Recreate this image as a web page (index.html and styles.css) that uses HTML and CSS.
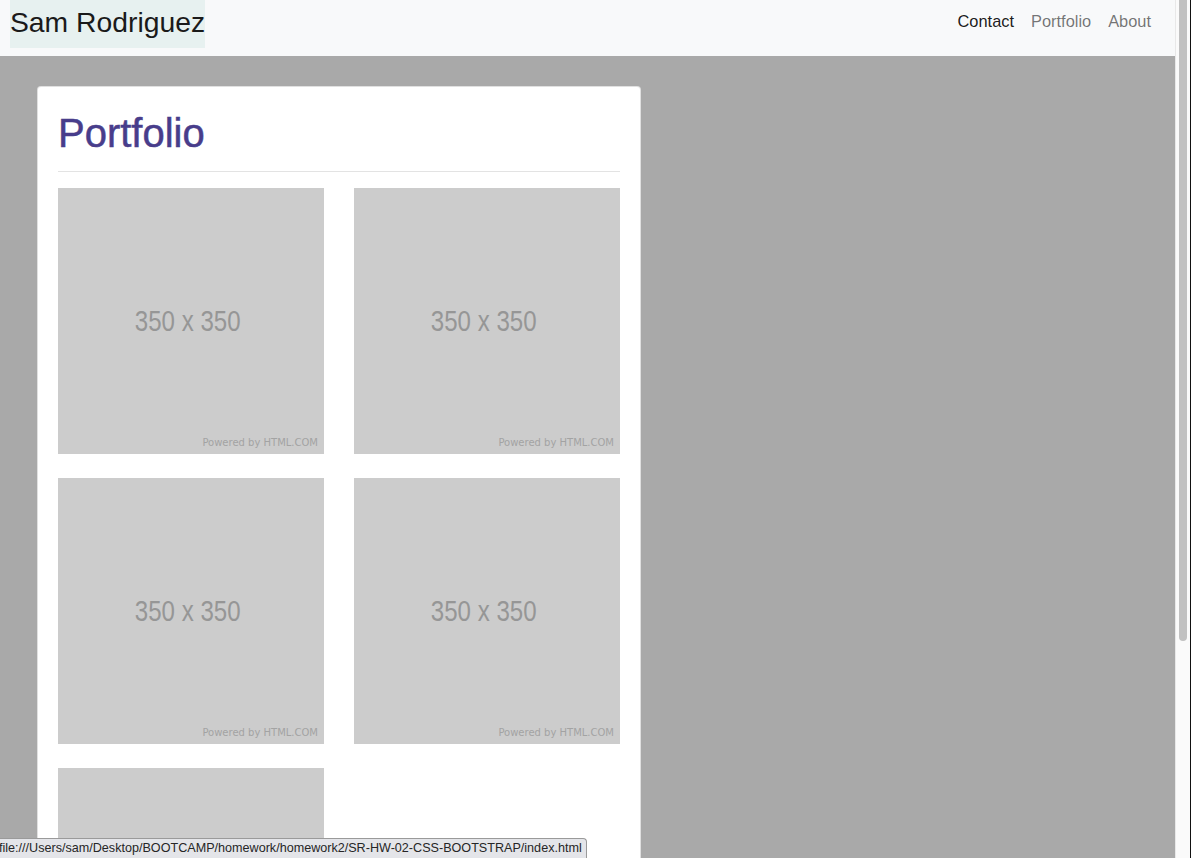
FILE: index.html
```html
<!DOCTYPE html>
<html lang="en">
<head>
<meta charset="utf-8">
<title>Sam Rodriguez</title>
<link rel="stylesheet" href="styles.css">
</head>
<body>
<div class="window">
  <div class="page">
    <header class="navbar">
      <a class="brand" href="#">Sam Rodriguez</a>
      <nav class="nav">
        <a class="nav-link active" href="#">Contact</a>
        <a class="nav-link" href="#">Portfolio</a>
        <a class="nav-link" href="#">About</a>
      </nav>
    </header>
    <main class="main">
      <section class="card">
        <h1 class="title">Portfolio</h1>
        <hr class="rule">
        <div class="gallery">
          <div class="ph"><span class="ph-size">350 x 350</span><span class="ph-credit">Powered by HTML.COM</span></div>
          <div class="ph"><span class="ph-size">350 x 350</span><span class="ph-credit">Powered by HTML.COM</span></div>
          <div class="ph"><span class="ph-size">350 x 350</span><span class="ph-credit">Powered by HTML.COM</span></div>
          <div class="ph"><span class="ph-size">350 x 350</span><span class="ph-credit">Powered by HTML.COM</span></div>
          <div class="ph"><span class="ph-size">350 x 350</span><span class="ph-credit">Powered by HTML.COM</span></div>
        </div>
      </section>
    </main>
  </div>
  <div class="scrollbar"><div class="thumb"></div></div>
</div>
<div class="statusbar">file:///Users/sam/Desktop/BOOTCAMP/homework/homework2/SR-HW-02-CSS-BOOTSTRAP/index.html</div>
</body>
</html>
```

FILE: styles.css
```css
* { box-sizing: border-box; }
html, body { margin: 0; padding: 0; height: 100%; overflow: hidden; }
body {
  font-family: "Liberation Sans", Arial, sans-serif;
  color: #212529;
  background: #a9a9a9;
}
.window {
  display: flex;
  height: 858px;
  overflow: hidden;
}
.page {
  width: 1175px;
  flex: none;
  display: flex;
  flex-direction: column;
  background: #a9a9a9;
}
.navbar {
  height: 56px;
  flex: none;
  background: #f8f9fa;
  display: flex;
  justify-content: space-between;
  align-items: flex-start;
  padding: 0 16px 0 10px;
}
.brand {
  display: block;
  background: #e7f1f0;
  color: #1a1a1a;
  text-decoration: none;
  font-size: 28.3px;
  line-height: 32px;
  padding: 6px 0 10px;
}
.nav {
  display: flex;
  padding-top: 9px;
}
.nav-link {
  font-size: 16.4px;
  line-height: 24px;
  padding: 0 8.5px;
  color: rgba(0,0,0,.55);
  text-decoration: none;
}
.nav-link:last-child { padding-right: 8px; }
.nav-link.active { color: rgba(0,0,0,.9); }
.main {
  flex: 1;
  padding: 30px 0 0 37px;
}
.card {
  width: 604px;
  background: #fff;
  border: 1px solid rgba(0,0,0,.12);
  border-radius: 4px;
  padding: 22px 20px 40px 20px;
}
.title {
  margin: 0;
  font-weight: 400;
  font-size: 40px;
  line-height: 48px;
  color: #483d8b;
  -webkit-text-stroke: 0.5px #483d8b;
}
.rule {
  margin: 14px 0 16px;
  border: 0;
  border-top: 1px solid #e3e3e3;
}
.gallery {
  display: grid;
  grid-template-columns: 266px 266px;
  column-gap: 30px;
  row-gap: 24px;
}
.ph {
  position: relative;
  width: 266px;
  height: 266px;
  background: #cccccc;
  display: flex;
  align-items: center;
  justify-content: center;
}
.ph-size {
  font-family: "Liberation Sans", Arial, sans-serif;
  font-size: 29px;
  color: #969696;
  transform: scaleX(0.83);
  margin-left: -6px;
}
.ph-credit {
  position: absolute;
  right: 6px;
  bottom: 6px;
  font-family: "DejaVu Sans", Verdana, sans-serif;
  font-size: 10px;
  color: #a3a3a3;
}
.scrollbar {
  width: 16px;
  flex: none;
  background: #fafafa;
  border-left: 1px solid #e8e8e8;
  border-right: 1px solid #111;
  padding: 0 3px 0 3px;
}
.thumb {
  width: 8px;
  height: 641px;
  background: #c1c1c1;
  border-radius: 0 0 4px 4px;
}
.statusbar {
  position: fixed;
  left: 0;
  bottom: 0;
  width: 587px;
  height: 20px;
  background: #e4e5e9;
  border-top: 1px solid #9a9a9a;
  border-right: 1px solid #9a9a9a;
  border-top-right-radius: 4px;
  font-family: "Liberation Sans", Arial, sans-serif;
  font-size: 12.6px;
  line-height: 19px;
  color: #262626;
  white-space: nowrap;
  overflow: hidden;
  text-indent: -1px;
}
```
